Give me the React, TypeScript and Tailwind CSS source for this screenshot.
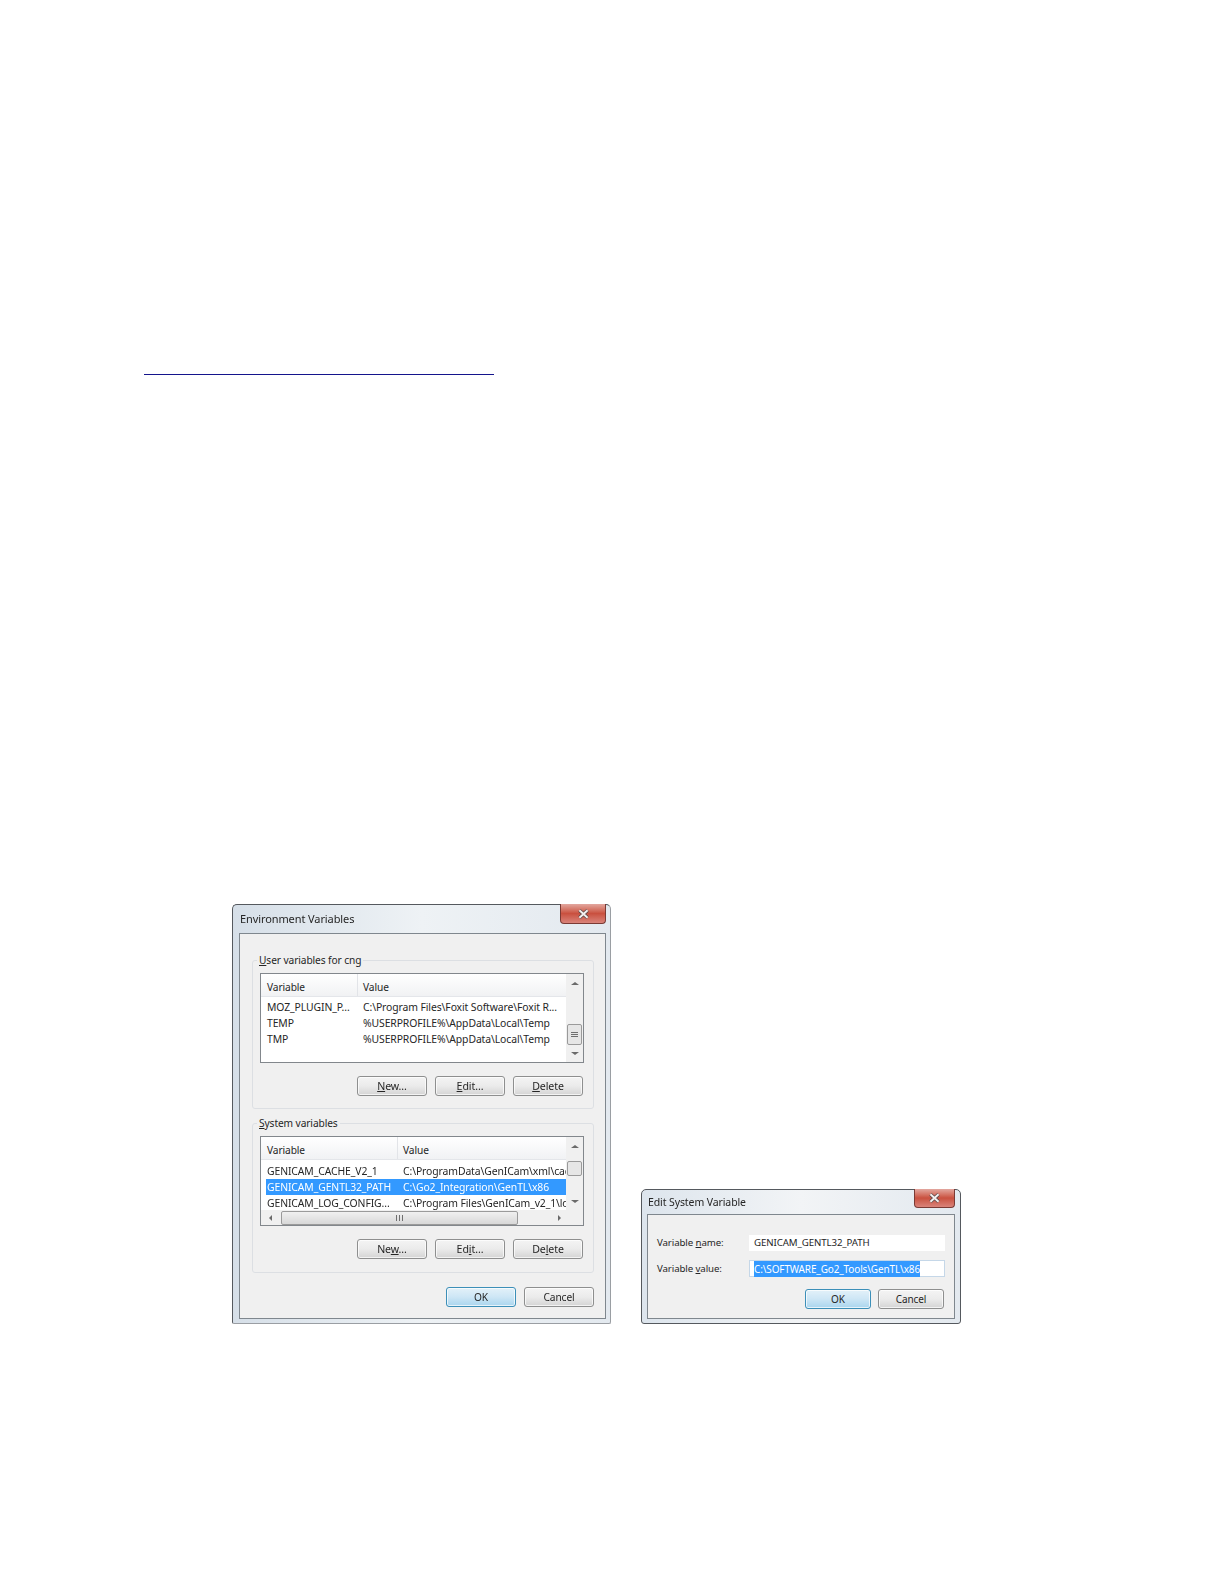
import React from "react";

const font = "font-['Noto_Sans','Liberation_Sans',sans-serif] leading-[16px] text-[#262626] tracking-[-0.1px]";

function CloseBtn({ w, h }: { w: string; h: string }) {
  return (
    <div className={`${w} ${h} -mt-px rounded-b-[4px] border border-t-0 border-[#7a3a34] bg-gradient-to-b from-[#e2a79f] via-[#c9503f] to-[#d9837a] flex items-center justify-center`}>
      <svg width="13" height="10" viewBox="0 0 14 11">
        <path d="M2.5 1.5 L11.5 9.5 M11.5 1.5 L2.5 9.5" stroke="#5b4a4a" strokeWidth="3.8" />
        <path d="M2.5 1.5 L11.5 9.5 M11.5 1.5 L2.5 9.5" stroke="#f4f0f0" strokeWidth="2.2" />
      </svg>
    </div>
  );
}

function Btn({ children, w, primary }: { children: React.ReactNode; w: string; primary?: boolean }) {
  return (
    <div
      className={`${w} h-[20px] rounded-[3px] border flex items-center justify-center shadow-[inset_0_0_0_1px_rgba(255,255,255,0.7)] ${
        primary
          ? "border-[#3c8fb8] bg-gradient-to-b from-[#e3f1f9] via-[#cde6f5] to-[#a9d5ee]"
          : "border-[#8e8f8f] bg-gradient-to-b from-[#f4f4f4] via-[#ebebeb] to-[#d4d4d4]"
      }`}
    >
      {children}
    </div>
  );
}

function Arrow({ dir, color = "#6a6a6a" }: { dir: "up" | "down" | "left" | "right"; color?: string }) {
  const points = {
    up: "4,2 8,5 0,5",
    down: "0,2 8,2 4,5",
    left: "5,1 5,7 2,4",
    right: "2,1 2,7 5,4",
  }[dir];
  return (
    <svg width="8" height="8" viewBox="0 0 8 8">
      <polygon points={points} fill={color} />
    </svg>
  );
}

function Grip() {
  return (
    <div className="flex flex-col gap-px">
      <div className="w-[7px] h-px bg-[#6f6f6f]" />
      <div className="w-[7px] h-px bg-[#6f6f6f]" />
      <div className="w-[7px] h-px bg-[#6f6f6f]" />
    </div>
  );
}

function Header({ col }: { col: string }) {
  return (
    <div className="h-[23px] flex bg-gradient-to-b from-white to-[#f1f2f4] border-b border-[#e4e6ea] text-[10.2px]">
      <div className={`${col} pl-[6px] pt-[3px] border-r border-[#e2e4e8] flex items-center`}>Variable</div>
      <div className="pl-[5px] pt-[3px] flex items-center">Value</div>
    </div>
  );
}

function Row({ name, value, col, selected }: { name: string; value: string; col: string; selected?: boolean }) {
  return (
    <div className={`h-[16px] flex ml-[5px] whitespace-nowrap overflow-hidden text-[10.4px] ${selected ? "bg-[#3399ff] text-white" : ""}`}>
      <div className={`${col} pl-[1px] shrink-0`}>{name}</div>
      <div className="pl-[5px]">{value}</div>
    </div>
  );
}

function Group({ label, children, h }: { label: React.ReactNode; children: React.ReactNode; h: string }) {
  return (
    <div className={`relative w-[342px] ${h} rounded-[3px] border border-[#dcdfe3] pt-[12px] pl-[7px]`}>
      <div className="absolute left-[4px] -top-[9px] bg-[#f0f0f0] px-[2px] text-[10.2px]">{label}</div>
      {children}
    </div>
  );
}

function ListButtons({ n, e, d }: { n: React.ReactNode; e: React.ReactNode; d: React.ReactNode }) {
  return (
    <div className="mt-[13px] ml-[97px] flex gap-[8px] text-[10.6px]">
      <Btn w="w-[70px]">{n}</Btn>
      <Btn w="w-[70px]">{e}</Btn>
      <Btn w="w-[70px]">{d}</Btn>
    </div>
  );
}

function EnvDialog() {
  return (
    <div className="w-[379px] h-[420px] rounded-t-[5px] rounded-b-[2px] border border-[#55595e] border-r-[#9a9ea3] border-b-[#9a9ea3] bg-gradient-to-r from-[#d6dfe8] via-[#eef2f5] to-[#e3e9ef] flex flex-col">
      <div className="h-[28px] flex justify-between shrink-0 pr-[4px]">
        <div className="pl-[7px] pt-[6px] text-[11px]">Environment Variables</div>
        <CloseBtn w="w-[46px]" h="h-[20px]" />
      </div>
      <div className="ml-[6px] w-[367px] h-[386px] border border-[#7f878e] bg-[#f0f0f0] pl-[12px] pt-[26px]">
        <Group label={<span><u>U</u>ser variables for cng</span>} h="h-[149px]">
          <div className="w-[324px] h-[90px] border border-[#82878c] bg-white flex">
            <div className="w-[305px]">
              <Header col="w-[97px]" />
              <div className="h-[2px]" />
              <Row name="MOZ_PLUGIN_P..." value="C:\Program Files\Foxit Software\Foxit R..." col="w-[92px]" />
              <Row name="TEMP" value="%USERPROFILE%\AppData\Local\Temp" col="w-[92px]" />
              <Row name="TMP" value="%USERPROFILE%\AppData\Local\Temp" col="w-[92px]" />
            </div>
            <div className="w-[17px] bg-[#f0f0f0] flex flex-col items-center pt-[6px] pb-[4px]">
              <Arrow dir="up" />
              <div className="mt-[36px] w-[15px] h-[21px] rounded-[2px] border border-[#9a9a9a] bg-[#e6e6e6] flex items-center justify-center">
                <Grip />
              </div>
              <div className="mt-auto"><Arrow dir="down" /></div>
            </div>
          </div>
          <ListButtons
            n={<span><u>N</u>ew...</span>}
            e={<span><u>E</u>dit...</span>}
            d={<span><u>D</u>elete</span>}
          />
        </Group>
        <div className="h-[14px]" />
        <Group label={<span><u>S</u>ystem variables</span>} h="h-[150px]">
          <div className="w-[324px] h-[90px] border border-[#82878c] bg-white flex flex-col">
            <div className="flex h-[73px]">
              <div className="w-[305px]">
                <Header col="w-[137px]" />
                <div className="h-[3px]" />
                <Row name="GENICAM_CACHE_V2_1" value="C:\ProgramData\GenICam\xml\cache" col="w-[132px]" />
                <Row name="GENICAM_GENTL32_PATH" value="C:\Go2_Integration\GenTL\x86" col="w-[132px]" selected />
                <Row name="GENICAM_LOG_CONFIG..." value="C:\Program Files\GenICam_v2_1\log" col="w-[132px]" />
              </div>
              <div className="w-[17px] bg-[#f0f0f0] flex flex-col items-center pt-[6px] pb-[4px]">
                <Arrow dir="up" />
                <div className="mt-[10px] w-[15px] h-[15px] rounded-[2px] border border-[#9a9a9a] bg-[#e6e6e6]" />
                <div className="mt-auto"><Arrow dir="down" /></div>
              </div>
            </div>
            <div className="h-[15px] bg-[#f0f0f0] flex items-center">
              <div className="w-[20px] flex justify-center"><Arrow dir="left" /></div>
              <div className="w-[237px] h-[14px] rounded-[2px] border border-[#9a9a9a] bg-gradient-to-b from-[#f0f0f0] to-[#d8d8d8] flex items-center justify-center gap-px">
                <div className="w-px h-[6px] bg-[#6f6f6f]" />
                <div className="w-px h-[6px] bg-[#6f6f6f] ml-px" />
                <div className="w-px h-[6px] bg-[#6f6f6f] ml-px" />
              </div>
              <div className="w-[50px] flex justify-end pr-[4px]"><Arrow dir="right" /></div>
            </div>
          </div>
          <ListButtons
            n={<span>Ne<u>w</u>...</span>}
            e={<span>Ed<u>i</u>t...</span>}
            d={<span>De<u>l</u>ete</span>}
          />
        </Group>
        <div className="mt-[14px] ml-[194px] flex gap-[8px] text-[10.2px]">
          <Btn w="w-[70px]" primary>OK</Btn>
          <Btn w="w-[70px]">Cancel</Btn>
        </div>
      </div>
    </div>
  );
}

function EditDialog() {
  return (
    <div className="w-[320px] h-[135px] rounded-t-[5px] rounded-b-[3px] border border-[#55595e] bg-gradient-to-r from-[#dde5ed] via-[#f2f4f6] to-[#e3e9ef] flex flex-col">
      <div className="h-[24px] flex justify-between shrink-0 pr-[5px]">
        <div className="pl-[6px] pt-[4px] text-[10.5px]">Edit System Variable</div>
        <CloseBtn w="w-[41px]" h="h-[19px]" />
      </div>
      <div className="ml-[5px] w-[308px] h-[105px] border border-[#7f878e] bg-[#f0f0f0] pl-[9px] pt-[20px] pr-[9px] text-[9.7px]">
        <div className="flex items-center h-[16px]">
          <div className="w-[92px]">Variable <u>n</u>ame:</div>
          <div className="w-[196px] h-[16px] bg-white pl-[5px] flex items-center">GENICAM_GENTL32_PATH</div>
        </div>
        <div className="flex items-center h-[17px] mt-[9px]">
          <div className="w-[92px]">Variable <u>v</u>alue:</div>
          <div className="w-[196px] h-[17px] bg-white border border-[#c5d7e8] pl-[4px] flex items-center text-[9.95px]">
            <span className="bg-[#3399ff] text-white">C:\SOFTWARE_Go2_Tools\GenTL\x86</span>
          </div>
        </div>
        <div className="mt-[12px] flex justify-end gap-[7px] pr-[1px] text-[10px]">
          <Btn w="w-[66px]" primary>OK</Btn>
          <Btn w="w-[66px]">Cancel</Btn>
        </div>
      </div>
    </div>
  );
}

export default function App() {
  return (
    <div className="w-[1224px] h-[1584px] bg-white overflow-hidden">
      <div className="pt-[374px] pl-[144px]">
        <div className="w-[350px] h-px bg-[#14148c]" />
      </div>
      <div className={`mt-[529px] ml-[232px] flex items-end gap-[30px] blur-[0.3px] ${font}`}>
        <EnvDialog />
        <EditDialog />
      </div>
    </div>
  );
}
